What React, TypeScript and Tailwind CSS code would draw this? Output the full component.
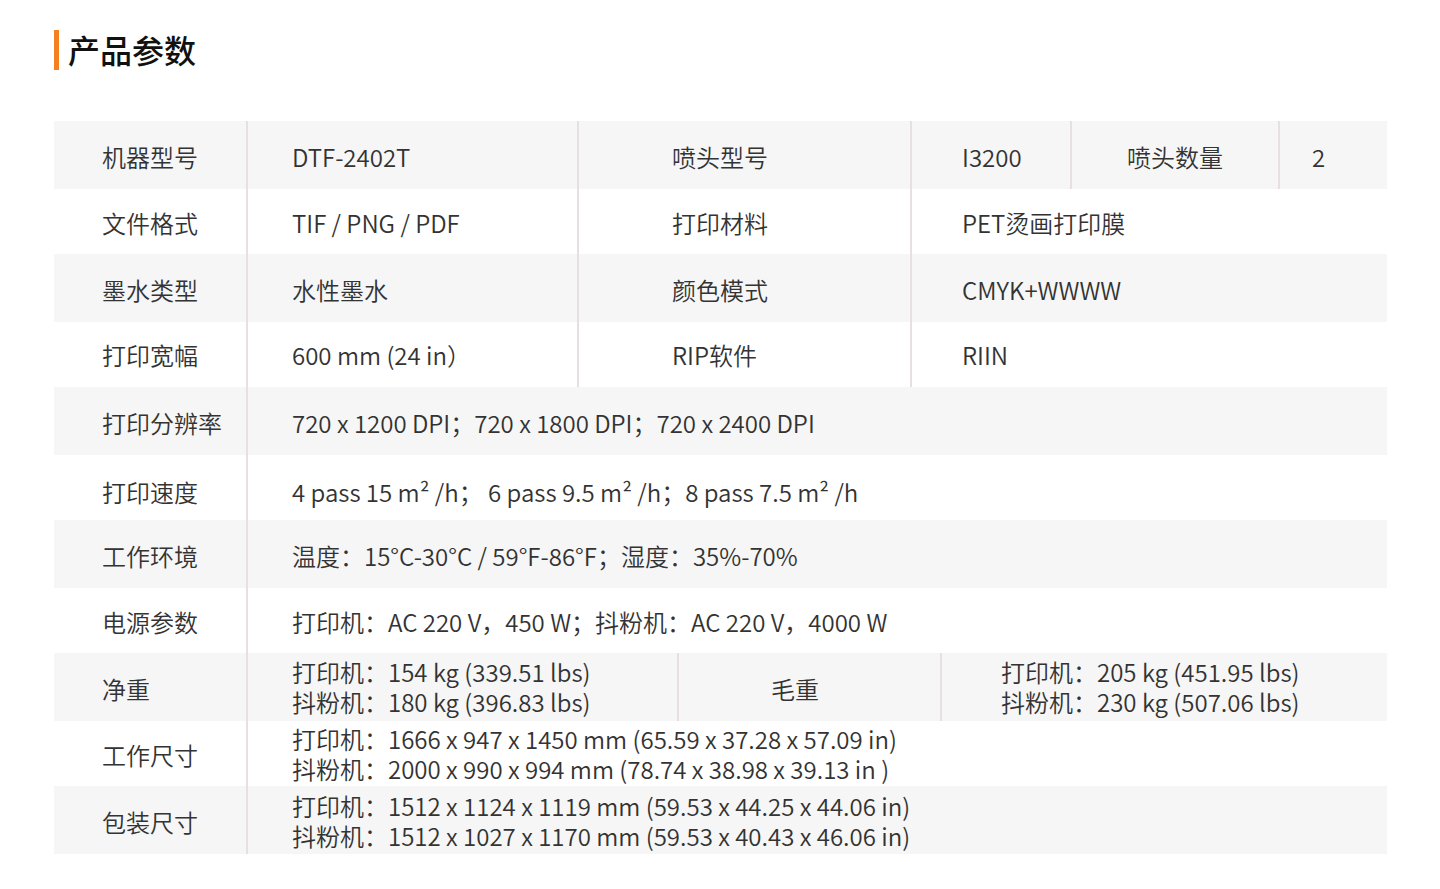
import React from "react";

const F = { fontFamily: '"Noto Sans CJK SC", "Noto Sans", sans-serif' };

function Cell({
  className = "",
  children,
}: {
  className?: string;
  children: React.ReactNode;
}) {
  return <div className={`flex items-center h-full ${className}`}>{children}</div>;
}

const B = "border-l-2 border-[#e8dfe2]";

function Two({ a, b }: { a: string; b: string }) {
  return (
    <div className="leading-[30px]">
      <div>{a}</div>
      <div>{b}</div>
    </div>
  );
}

export default function App() {
  const gray = "bg-[#f6f6f6] h-[68px]";
  const white = "bg-white h-[65px]";
  const t = "pt-[3px]";
  const t6 = "pt-[8px]";
  return (
    <div className="w-[1440px] h-[889px] bg-white text-[#333]" style={F}>
      <div className="pt-[30px] pl-[54px] flex items-center">
        <div className="w-[5px] h-[40px] bg-[#f47f20]" />
        <h1 className="ml-[9px] -mt-[2px] text-[32px] leading-[40px] font-medium text-[#111]">产品参数</h1>
      </div>

      <div className="mt-[51px] mx-[54px] w-[1333px] text-[24px] leading-[30px] font-[350]">
        {/* Row 1 */}
        <div className={`flex ${gray}`}>
          <Cell className={`w-[192px] pl-[48px] ${t}`}>机器型号</Cell>
          <Cell className={`w-[331px] pl-[44px] ${t} ${B}`}>DTF-2402T</Cell>
          <Cell className={`w-[333px] pl-[93px] ${t} ${B}`}>喷头型号</Cell>
          <Cell className={`w-[160px] pl-[50px] ${t} ${B}`}>I3200</Cell>
          <Cell className={`w-[208px] justify-center ${t} ${B}`}>喷头数量</Cell>
          <Cell className={`flex-1 pl-[32px] ${t} ${B}`}>2</Cell>
        </div>
        {/* Row 2 */}
        <div className={`flex ${white}`}>
          <Cell className={`w-[192px] pl-[48px] ${t}`}>文件格式</Cell>
          <Cell className={`w-[331px] pl-[44px] ${t} ${B}`}>TIF / PNG / PDF</Cell>
          <Cell className={`w-[333px] pl-[93px] ${t} ${B}`}>打印材料</Cell>
          <Cell className={`flex-1 pl-[50px] ${t} ${B}`}>PET烫画打印膜</Cell>
        </div>
        {/* Row 3 */}
        <div className={`flex ${gray}`}>
          <Cell className={`w-[192px] pl-[48px] ${t}`}>墨水类型</Cell>
          <Cell className={`w-[331px] pl-[44px] ${t} ${B}`}>水性墨水</Cell>
          <Cell className={`w-[333px] pl-[93px] ${t} ${B}`}>颜色模式</Cell>
          <Cell className={`flex-1 pl-[50px] ${t} ${B}`}>CMYK+WWWW</Cell>
        </div>
        {/* Row 4 */}
        <div className={`flex ${white}`}>
          <Cell className={`w-[192px] pl-[48px]`}>打印宽幅</Cell>
          <Cell className={`w-[331px] pl-[44px] ${B}`}>600 mm (24 in）</Cell>
          <Cell className={`w-[333px] pl-[93px] ${B}`}>RIP软件</Cell>
          <Cell className={`flex-1 pl-[50px] ${B}`}>RIIN</Cell>
        </div>
        {/* Row 5 */}
        <div className={`flex ${gray}`}>
          <Cell className={`w-[192px] pl-[48px] ${t}`}>打印分辨率</Cell>
          <Cell className={`flex-1 pl-[44px] ${t} ${B}`}>720 x 1200 DPI；720 x 1800 DPI；720 x 2400 DPI</Cell>
        </div>
        {/* Row 6 */}
        <div className={`flex ${white}`}>
          <Cell className={`w-[192px] pl-[48px] ${t6}`}>打印速度</Cell>
          <Cell className={`flex-1 pl-[44px] ${t6} ${B}`}>
            4 pass 15 m² /h；{"\u00a0"}6 pass 9.5 m² /h；8 pass 7.5 m² /h
          </Cell>
        </div>
        {/* Row 7 */}
        <div className={`flex ${gray}`}>
          <Cell className={`w-[192px] pl-[48px] ${t}`}>工作环境</Cell>
          <Cell className={`flex-1 pl-[44px] ${t} ${B}`}>温度：15°C-30°C / 59°F-86°F；湿度：35%-70%</Cell>
        </div>
        {/* Row 8 */}
        <div className={`flex ${white}`}>
          <Cell className={`w-[192px] pl-[48px] ${t}`}>电源参数</Cell>
          <Cell className={`flex-1 pl-[44px] ${t} ${B}`}>打印机：AC 220 V，450 W；抖粉机：AC 220 V，4000 W</Cell>
        </div>
        {/* Row 9 */}
        <div className={`flex ${gray}`}>
          <Cell className={`w-[192px] pl-[48px] ${t}`}>净重</Cell>
          <Cell className={`w-[431px] pl-[44px] ${B}`}>
            <Two a="打印机：154 kg (339.51 lbs)" b="抖粉机：180 kg (396.83 lbs)" />
          </Cell>
          <Cell className={`w-[263px] pl-[92px] ${t} ${B}`}>毛重</Cell>
          <Cell className={`flex-1 pl-[59px] ${B}`}>
            <Two a="打印机：205 kg (451.95 lbs)" b="抖粉机：230 kg (507.06 lbs)" />
          </Cell>
        </div>
        {/* Row 10 */}
        <div className={`flex ${white}`}>
          <Cell className={`w-[192px] pl-[48px] ${t}`}>工作尺寸</Cell>
          <Cell className={`flex-1 pl-[44px] ${B}`}>
            <Two
              a="打印机：1666 x 947 x 1450 mm (65.59 x 37.28 x 57.09 in)"
              b="抖粉机：2000 x 990 x 994 mm (78.74 x 38.98 x 39.13 in )"
            />
          </Cell>
        </div>
        {/* Row 11 */}
        <div className={`flex ${gray}`}>
          <Cell className={`w-[192px] pl-[48px] ${t}`}>包装尺寸</Cell>
          <Cell className={`flex-1 pl-[44px] pt-[1px] ${B}`}>
            <Two
              a="打印机：1512 x 1124 x 1119 mm (59.53 x 44.25 x 44.06 in)"
              b="抖粉机：1512 x 1027 x 1170 mm (59.53 x 40.43 x 46.06 in)"
            />
          </Cell>
        </div>
      </div>
    </div>
  );
}
